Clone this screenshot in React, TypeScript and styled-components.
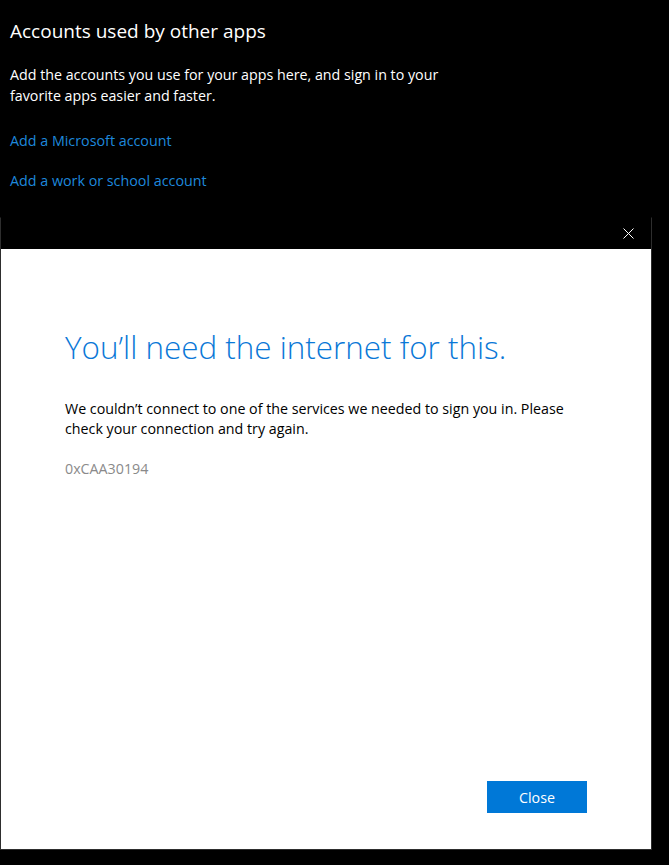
import React from "react";
import styled, { createGlobalStyle } from "styled-components";

const Global = createGlobalStyle`
  html, body { margin: 0; padding: 0; background: #000; }
  body { font-family: "Open Sans", "Noto Sans", sans-serif; }
  * { box-sizing: border-box; }
`;

const Page = styled.div`
  width: 669px;
  height: 865px;
  background: #000;
  overflow: hidden;
  display: flex;
  flex-direction: column;
`;

const Settings = styled.section`
  padding: 17px 10px 0 10px;
  display: flex;
  flex-direction: column;
`;

const Heading = styled.h2`
  margin: 0;
  font-size: 19px;
  font-weight: 400;
  line-height: 28px;
  color: #fff;
`;

const Description = styled.p`
  margin: 19px 0 0 0;
  width: 450px;
  font-size: 14.25px;
  line-height: 21px;
  color: #fff;
`;

const LinkList = styled.div`
  margin-top: 24px;
  display: flex;
  flex-direction: column;
  gap: 19px;
`;

const Link = styled.a`
  font-size: 14.3px;
  line-height: 21px;
  color: #1e88dc;
  text-decoration: none;
  cursor: pointer;
`;

const Dialog = styled.div`
  margin-top: 26px;
  width: 652px;
  height: 633px;
  border: 1px solid #2e2e2e;
  border-top-color: #000;
  display: flex;
  flex-direction: column;
`;

const TitleBar = styled.div`
  height: 31px;
  background: #000;
  display: flex;
  justify-content: flex-end;
  align-items: center;
  padding-right: 17px;
`;

const CloseX = styled.button`
  width: 12px;
  height: 12px;
  padding: 0;
  border: none;
  background: none;
  display: flex;
  align-items: center;
  justify-content: center;
  cursor: pointer;
`;

const Body = styled.div`
  flex: 1;
  background: #fff;
  padding: 77px 64px 36px 64px;
  display: flex;
  flex-direction: column;
`;

const Title = styled.h1`
  margin: 0;
  font-size: 31.4px;
  font-weight: 300;
  line-height: 42px;
  color: #0a78d7;
`;

const Message = styled.p`
  margin: 31px 0 0 0;
  font-size: 14.25px;
  line-height: 20px;
  color: #000;
`;

const Code = styled.p`
  margin: 20px 0 0 0;
  font-size: 14.25px;
  line-height: 20px;
  color: #8a8a8a;
`;

const Footer = styled.div`
  margin-top: auto;
  display: flex;
  justify-content: flex-end;
`;

const PrimaryButton = styled.button`
  width: 100px;
  height: 32px;
  border: none;
  background: #0078d7;
  color: #fff;
  font-family: "Open Sans", "Noto Sans", sans-serif;
  font-size: 14.25px;
  cursor: pointer;
`;

export default function App() {
  return (
    <Page>
      <Global />
      <Settings>
        <Heading>Accounts used by other apps</Heading>
        <Description>
          Add the accounts you use for your apps here, and sign in to your favorite apps easier and faster.
        </Description>
        <LinkList>
          <Link>Add a Microsoft account</Link>
          <Link>Add a work or school account</Link>
        </LinkList>
      </Settings>
      <Dialog>
        <TitleBar>
          <CloseX aria-label="Close">
            <svg width="11" height="11" viewBox="0 0 11 11">
              <path d="M0.5 0.5 L10.5 10.5 M10.5 0.5 L0.5 10.5" stroke="#fff" strokeWidth="1" />
            </svg>
          </CloseX>
        </TitleBar>
        <Body>
          <Title>You’ll need the internet for this.</Title>
          <Message>
            We couldn’t connect to one of the services we needed to sign you in. Please check your connection and try again.
          </Message>
          <Code>0xCAA30194</Code>
          <Footer>
            <PrimaryButton>Close</PrimaryButton>
          </Footer>
        </Body>
      </Dialog>
    </Page>
  );
}
